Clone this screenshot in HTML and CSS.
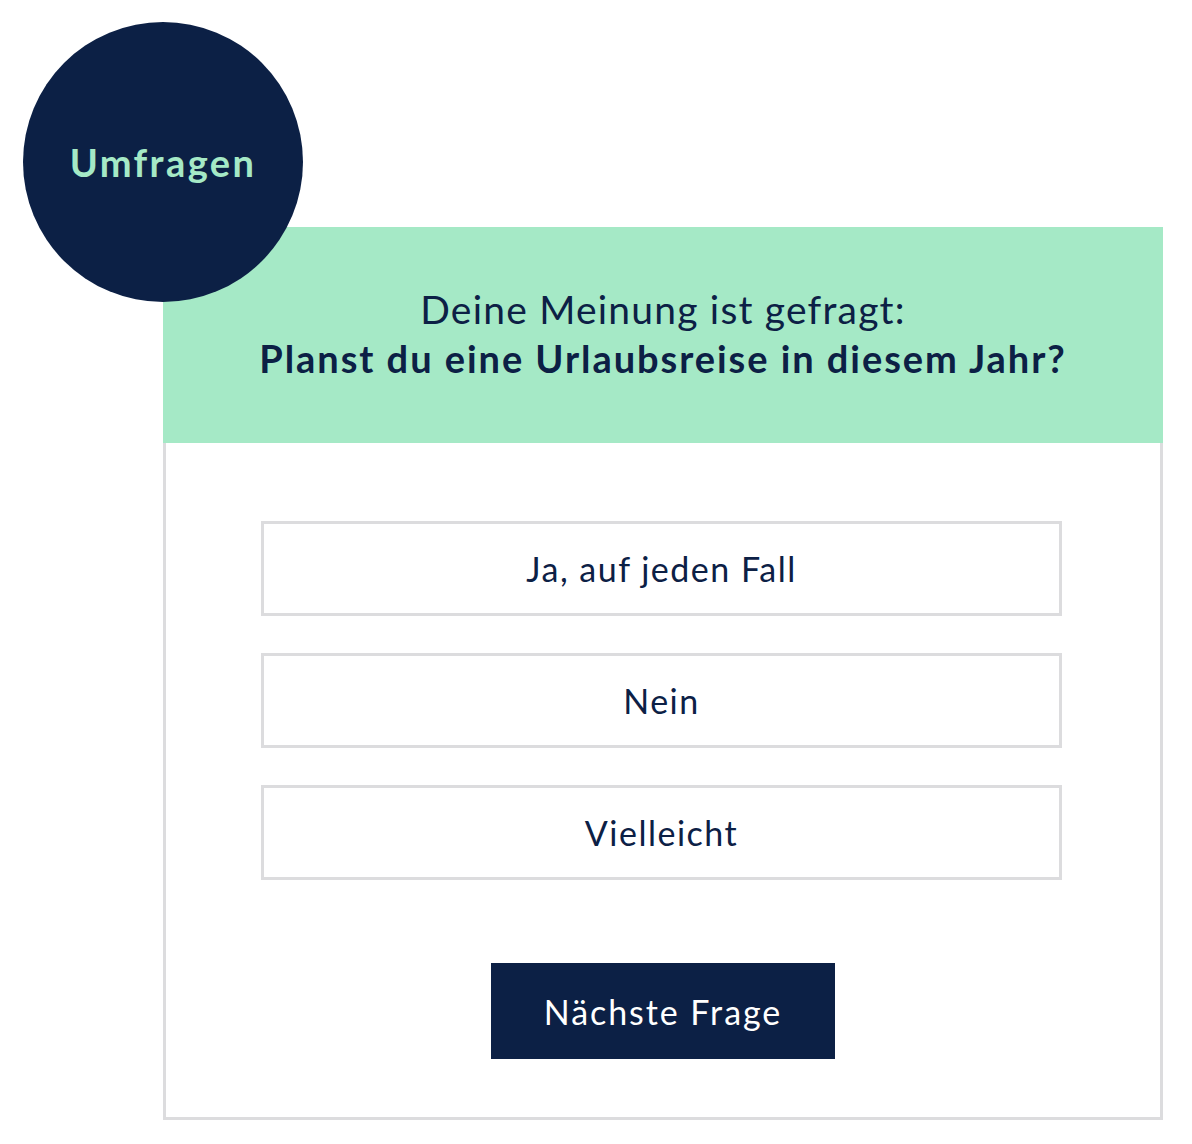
FILE: index.html
```html
<!DOCTYPE html>
<html lang="de">
<head>
<meta charset="utf-8">
<title>Umfragen</title>
<link rel="stylesheet" href="styles.css">
</head>
<body>
<div class="page">
  <div class="badge"><span>Umfragen</span></div>
  <div class="card">
    <div class="card-head">
      <p class="intro">Deine Meinung ist gefragt:</p>
      <p class="question">Planst du eine Urlaubsreise in diesem Jahr?</p>
    </div>
    <div class="card-body">
      <div class="options">
        <button class="option">Ja, auf jeden Fall</button>
        <button class="option">Nein</button>
        <button class="option">Vielleicht</button>
      </div>
      <button class="next">Nächste Frage</button>
    </div>
  </div>
</div>
</body>
</html>
```
FILE: styles.css
```css
* { box-sizing: border-box; }
html, body { margin: 0; padding: 0; background: #fff; }
body { font-family: Lato, "Noto Sans", sans-serif; color: #0c2045; }
.page {
  position: relative;
  width: 1192px;
  height: 1144px;
  padding: 227px 0 0 163px;
}
.badge {
  position: absolute;
  left: 23px;
  top: 22px;
  width: 280px;
  height: 280px;
  border-radius: 50%;
  background: #0c2045;
  display: flex;
  align-items: center;
  justify-content: center;
  z-index: 2;
}
.badge span {
  color: #a5e9c6;
  font-weight: 700;
  font-size: 38px;
  letter-spacing: 2.4px;
}
.card { width: 1000px; }
.card-head {
  background: #a5e9c6;
  height: 216px;
  padding-top: 58px;
  text-align: center;
}
.card-head p { margin: 0; }
.intro { font-size: 39px; line-height: 48px; font-weight: 400; letter-spacing: 1.2px; }
.question { font-size: 38px; line-height: 50px; font-weight: 700; letter-spacing: 1.95px; }
.card-body {
  border: 3px solid #dcdcde;
  border-top: none;
  height: 677px;
  padding-top: 78px;
  display: flex;
  flex-direction: column;
  align-items: center;
}
.options {
  display: flex;
  flex-direction: column;
  gap: 37px;
  width: 801px;
  margin-left: -3px;
}
.option {
  height: 95px;
  border: 3px solid #dcdcde;
  background: #fff;
  font-family: inherit;
  color: #0c2045;
  font-size: 34px;
  letter-spacing: 1.5px;
  padding: 0;
}
.next {
  margin-top: 83px;
  width: 344px;
  height: 96px;
  background: #0c2045;
  border: none;
  color: #fff;
  font-family: inherit;
  font-size: 34px;
  letter-spacing: 1.95px;
  padding: 0;
}
```
